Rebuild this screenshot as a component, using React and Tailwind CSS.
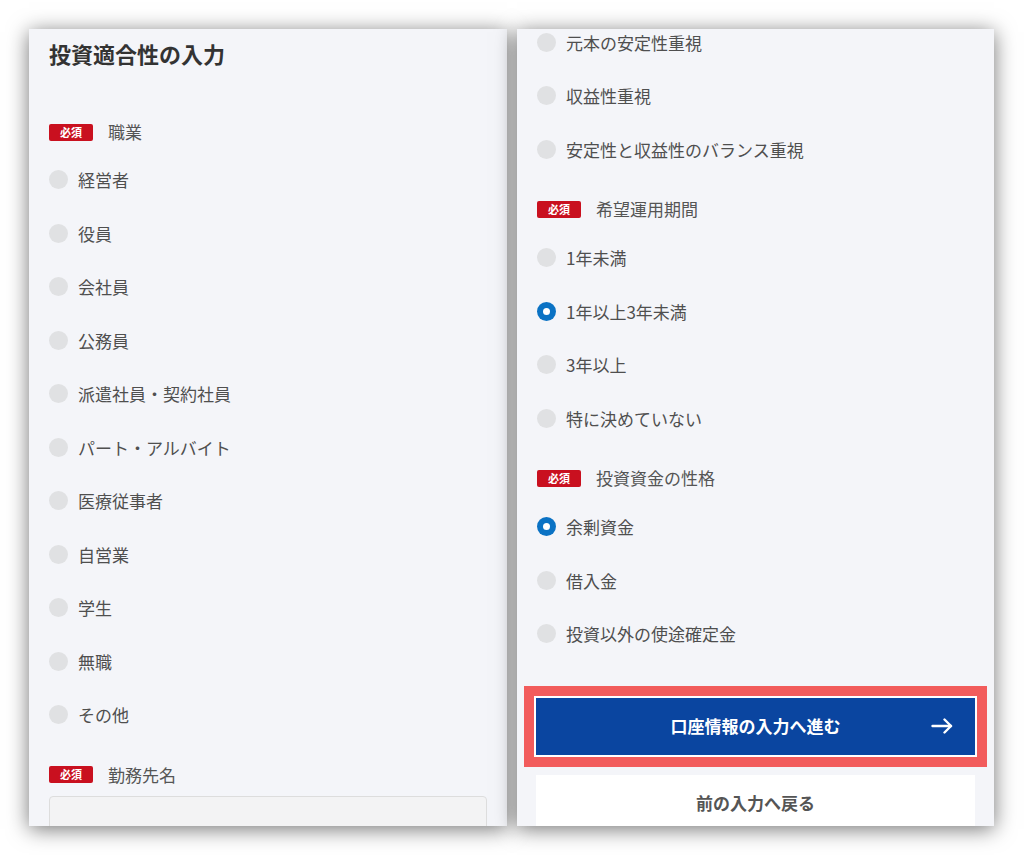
import React from "react";

const font = { fontFamily: '"Noto Sans CJK JP", "Noto Sans", sans-serif' };

function Badge() {
  return (
    <span className="inline-flex h-[17px] w-[44px] items-center justify-center rounded-[2px] bg-[#c9101f] text-[11px] font-bold leading-none text-white">
      必須
    </span>
  );
}

function Label({ text, first }) {
  return (
    <div className={`flex h-[30px] items-center gap-[15px] ${first ? "" : "mt-[18px]"}`}>
      <Badge />
      <span className="text-[17px] text-[#555555]">{text}</span>
    </div>
  );
}

function Radio({ text, checked }) {
  return (
    <div className="flex h-[53.5px] items-center gap-[10px]">
      {checked ? (
        <span className="flex h-[19px] w-[19px] items-center justify-center rounded-full bg-[#0a72c4]">
          <span className="h-[7px] w-[7px] rounded-full bg-white" />
        </span>
      ) : (
        <span className="h-[19px] w-[19px] rounded-full bg-[#e0e1e3]" />
      )}
      <span className="text-[17px] text-[#4f4f4f]">{text}</span>
    </div>
  );
}

function Options({ items, checkedIndex = -1, className = "mt-[6px]" }) {
  return (
    <div className={className}>
      {items.map((t, i) => (
        <Radio key={t} text={t} checked={i === checkedIndex} />
      ))}
    </div>
  );
}

export default function App() {
  return (
    <div className="h-[855px] w-[1024px] overflow-hidden bg-white" style={font}>
      <div className="flex gap-[10px] pl-[29px] pt-[29px]">
        {/* Left panel */}
        <div className="h-[797px] w-[478px] overflow-hidden bg-[#f4f5f9] px-[20px] shadow-[0_3px_20px_rgba(0,0,0,0.55)]">
          <div className="h-[88px] pt-[9px]">
            <h1 className="text-[22px] font-bold leading-[30px] text-[#333333]">投資適合性の入力</h1>
          </div>
          <Label text="職業" first />
          <Options
            items={[
              "経営者",
              "役員",
              "会社員",
              "公務員",
              "派遣社員・契約社員",
              "パート・アルバイト",
              "医療従事者",
              "自営業",
              "学生",
              "無職",
              "その他",
            ]}
          />
          <Label text="勤務先名" />
          <div className="mt-[6px] h-[50px] w-full rounded-[4px] border border-[#dddddd] bg-[#f3f3f4]" />
        </div>

        {/* Right panel */}
        <div className="relative h-[797px] w-[477px] overflow-hidden bg-[#f4f5f9] shadow-[0_3px_20px_rgba(0,0,0,0.55)]">
          <div className="px-[20px]">
            <Options
              className="mt-[-13.5px]"
              items={["元本の安定性重視", "収益性重視", "安定性と収益性のバランス重視"]}
            />
            <Label text="希望運用期間" />
            <Options
              className="mt-[7px]"
              items={["1年未満", "1年以上3年未満", "3年以上", "特に決めていない"]}
              checkedIndex={1}
            />
            <Label text="投資資金の性格" />
            <Options className="mt-[7px]" items={["余剰資金", "借入金", "投資以外の使途確定金"]} checkedIndex={0} />
          </div>
          <div className="mx-[7px] mt-[25px] border-[10px] border-[#f25c5c] bg-white p-[2px]">
            <button className="relative flex h-[57px] w-full items-center justify-center bg-[#0a45a0] text-[17px] font-bold text-white">
              口座情報の入力へ進む
              <svg
                className="absolute right-[22px] top-1/2 -translate-y-1/2"
                width="22"
                height="16"
                viewBox="0 0 22 16"
                fill="none"
                stroke="white"
                strokeWidth="2.4"
                strokeLinecap="round"
                strokeLinejoin="round"
              >
                <path d="M1.5 8H20" />
                <path d="M13.5 1.5L20 8l-6.5 6.5" />
              </svg>
            </button>
          </div>
          <div className="mx-[19px] mt-[8px] flex h-[56px] items-center justify-center bg-white text-[17px] font-bold text-[#555555]">
            前の入力へ戻る
          </div>
        </div>
      </div>
    </div>
  );
}
